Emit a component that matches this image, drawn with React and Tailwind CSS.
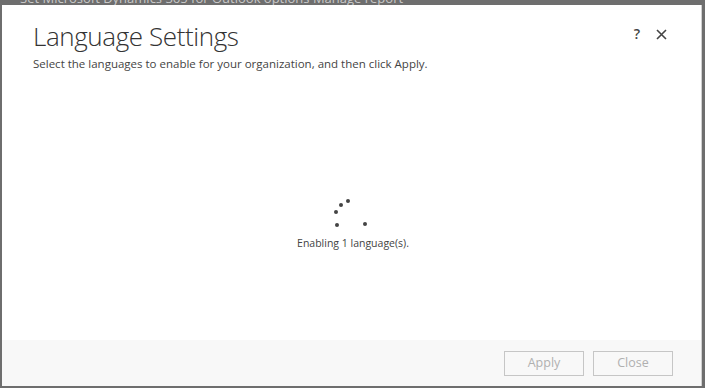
export default function App() {
  const dots = [
    { x: 336, y: 211 },
    { x: 341, y: 204 },
    { x: 348, y: 200 },
    { x: 337, y: 224 },
    { x: 365, y: 223 },
  ];

  return (
    <div
      className="w-[705px] h-[388px] bg-[#6e6e6e] flex flex-col overflow-hidden"
      style={{ fontFamily: '"Open Sans", "Noto Sans", sans-serif' }}
    >
      {/* page behind the dialog, mostly hidden */}
      <div className="h-[5px] overflow-hidden pl-[20px] flex shrink-0">
        <span className="text-[13px] leading-[13px] -mt-[8px] text-[#c8c8c8] whitespace-nowrap">
          Set Microsoft Dynamics 365 for Outlook options   Manage report
        </span>
      </div>
      <div className="flex-1 flex pl-[2px] pr-[3px] pb-[2px]">
        <div className="flex-1 bg-white flex flex-col border-r border-[#d0d0d0]">
          <div className="flex justify-between items-start pl-[31px] pr-[34px] pt-[13px]">
            <h1 className="text-[26px] font-light text-[#333] leading-[36px] tracking-[-0.4px]">
              Language Settings
            </h1>
            <div className="flex items-center gap-[16px] mt-[9px] text-[#444]">
              <span className="text-[14px] font-semibold leading-none">?</span>
              <svg width="11" height="11" viewBox="0 0 11 11" stroke="#444" strokeWidth="1.6">
                <path d="M1 1 L10 10 M10 1 L1 10" />
              </svg>
            </div>
          </div>
          <p className="pl-[31px] mt-[1px] text-[11.5px] text-[#444] leading-[18px]">
            Select the languages to enable for your organization, and then click Apply.
          </p>
          <div className="flex-1 relative">
            {dots.map((d, i) => (
              <div
                key={i}
                className="absolute w-[4px] h-[4px] rounded-full bg-[#444]"
                style={{ left: d.x - 4, top: d.y - 74 }}
              />
            ))}
            <div className="absolute left-0 right-0 top-[163px] text-center text-[10.5px] text-[#444] pl-[3px]">
              Enabling 1 language(s).
            </div>
          </div>
          <div className="h-[46px] bg-[#f8f8f8] flex justify-end items-start pt-[11px] pr-[28px] gap-[9px] shrink-0">
            <button className="w-[80px] h-[25px] border border-[#c6c6c6] bg-[#f8f8f8] text-[12.5px] text-[#b0b0b0]">
              Apply
            </button>
            <button className="w-[80px] h-[25px] border border-[#c6c6c6] bg-[#f8f8f8] text-[12.5px] text-[#b0b0b0]">
              Close
            </button>
          </div>
        </div>
      </div>
    </div>
  );
}
